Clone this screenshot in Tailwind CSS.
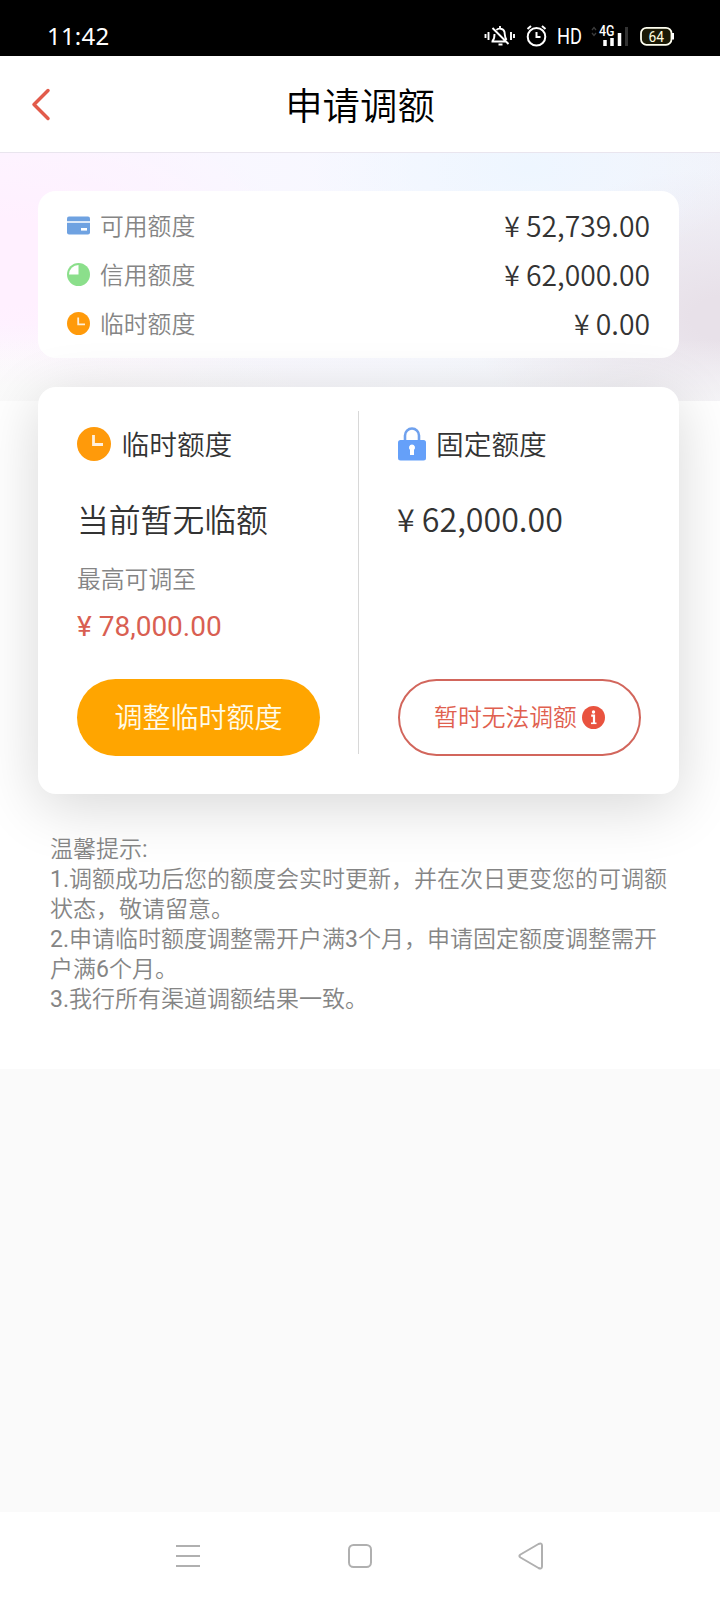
<!DOCTYPE html>
<html lang="zh-CN">
<head>
<meta charset="utf-8">
<title>申请调额</title>
<script src="https://cdn.jsdelivr.net/npm/@tailwindcss/browser@4"></script>
</head>
<body class="w-[720px] h-[1600px] overflow-hidden flex flex-col bg-[#fafafa] font-['Noto_Sans_CJK_SC',sans-serif] font-[350] text-[#333]">

<!-- Status bar -->
<div class="h-14 shrink-0 bg-black text-white flex items-center justify-between pl-[47px] pr-[46px] pt-4">
  <span class="font-['Noto_Sans','Noto_Sans_CJK_SC',sans-serif] font-normal text-2xl leading-none tracking-[0.2px] pb-px">11:42</span>
  <svg class="block" width="190" height="24" viewBox="0 0 190 24" fill="none" stroke="#fff" stroke-width="2">
    <path d="M1.500 10v4M4.500 8v8M27 8v8M30 10v4" stroke-width="1.900"/>
    <path d="M7.500 17.500h15M8.500 17c2-2 2-4 2-7M12.500 6c1.500-2 7-2 8 2 .5 3 0 5 2 8M8.500 4l16 16M16 2v3" stroke-width="1.900"/>
    <path d="M14.500 20.500h4" stroke-width="2"/>
    <circle cx="52.500" cy="12.800" r="8.800"/>
    <path d="M52.500 8v5h4" /><path d="M43.500 5l3.500-3M61.500 5l-3.500-3"/>
    <text x="73" y="20" fill="#fff" stroke="none" font-family="Roboto" font-size="22" font-weight="400" textLength="25" lengthAdjust="spacingAndGlyphs">HD</text>
    <path d="M108 6l2-2.500 2 2.500M108 9l2 2.500 2-2.500" stroke="#3c3c3c" stroke-width="1.300"/>
    <text x="115" y="12" fill="#fff" stroke="none" font-family="Roboto" font-size="14" font-weight="500" textLength="15.500" lengthAdjust="spacingAndGlyphs">4G</text>
    <path d="M121 16v6M128 14v8M135.500 9v13" stroke-width="3.500"/>
    <path d="M142.500 3v19" stroke="#333" stroke-width="3"/>
    <rect x="157" y="3.800" width="30.500" height="17" rx="5.500" fill="#1a1905" stroke="#fffff0" stroke-width="1.800"/>
    <path d="M189 9v6.500" stroke-width="2.300"/>
    <text x="164.500" y="17.500" fill="#fffee0" stroke="none" font-family="Roboto" font-size="15" font-weight="400" textLength="15.500" lengthAdjust="spacingAndGlyphs">64</text>
  </svg>
</div>

<!-- Title bar -->
<header class="h-[97px] shrink-0 bg-white border-b border-[#e9e5ee] grid grid-cols-[120px_1fr_120px] items-center">
  <svg class="ml-[29px]" width="22" height="34" viewBox="0 0 22 34" fill="none" stroke="#e25b4b" stroke-width="3.500" stroke-linecap="round" stroke-linejoin="round"><path d="M19 3.500L5 17.500l14 14"/></svg>
  <h1 class="text-center text-[37.400px] leading-[56px] text-black font-[350] pb-px">申请调额</h1>
</header>

<main class="h-[916px] shrink-0 px-[38px] pt-[38px] bg-white bg-no-repeat bg-[length:720px_248px] bg-[image:linear-gradient(to_bottom,transparent_75%,#fafafaa0_100%),radial-gradient(ellipse_330px_90px_at_0px_260px,#fbfbfb_25%,transparent_100%),radial-gradient(ellipse_300px_170px_at_0px_110px,#fff0ff_25%,transparent_100%),radial-gradient(ellipse_220px_100px_at_530px_15px,#eef6ff,transparent),radial-gradient(ellipse_260px_150px_at_730px_165px,#e8e1e9_15%,transparent_100%),linear-gradient(90deg,#fcf6ff,#f6f8ff_60%,#f2f3fa)]">
  <!-- Limit summary -->
  <section class="w-[641px] h-[167px] rounded-[18px] bg-white px-[29px] pt-[10px]">
    <div class="h-[49px] flex items-center">
      <svg width="23" height="23" viewBox="0 0 23 23"><rect y="2.500" width="23" height="18" rx="2" fill="#6fa2e1"/><path d="M0 8h23" stroke="#fff" stroke-width="1.500"/><rect x="14" y="14" width="6" height="2.600" fill="#fff"/></svg>
      <span class="ml-2.5 pb-px text-[23.800px] text-[#858585]">可用额度</span>
      <span class="ml-auto text-[28.300px]">¥ 52,739.00</span>
    </div>
    <div class="h-[49px] flex items-center">
      <svg width="23" height="23" viewBox="0 0 23 23"><circle cx="11.500" cy="11.500" r="11.500" fill="#8bdf8b"/><path d="M11.500 2v9.500H2a9.500 9.500 0 0 1 9.500-9.500Z" fill="#fff"/></svg>
      <span class="ml-2.5 pb-px text-[23.800px] text-[#858585]">信用额度</span>
      <span class="ml-auto text-[28.300px]">¥ 62,000.00</span>
    </div>
    <div class="h-[49px] flex items-center">
      <svg width="23" height="23" viewBox="0 0 23 23"><circle cx="11.500" cy="11.500" r="11.500" fill="#ff9a0a"/><path d="M11.200 5.500v6.800h6.800" stroke="#ffefd8" stroke-width="1.800" fill="none"/></svg>
      <span class="ml-2.5 pb-px text-[23.800px] text-[#858585]">临时额度</span>
      <span class="ml-auto text-[28.300px]">¥ 0.00</span>
    </div>
  </section>

  <!-- Adjustable limits -->
  <section class="mt-[29px] w-[641px] h-[407px] rounded-[18px] bg-white shadow-[0_12px_60px_rgba(0,0,0,0.16)] flex pt-[24px]">
    <div class="w-[321px] h-[343px] border-r border-[#d8d8d8] pl-[39px]">
      <div class="h-[66px] flex items-center">
        <svg width="34" height="34" viewBox="0 0 34 34"><circle cx="17" cy="17" r="17" fill="#ff9a0a"/><path d="M16.500 8v9.500H26" stroke="#fff0dc" stroke-width="2.800" fill="none"/></svg>
        <span class="ml-[10.500px] text-[27.700px]">临时额度</span>
      </div>
      <div class="mt-[17px] text-[31.800px] leading-[48px]">当前暂无临额</div>
      <div class="mt-[18px] text-[23.800px] leading-9 text-[#858585]">最高可调至</div>
      <div class="mt-[13px] text-[28px] leading-9 font-['Roboto',sans-serif] font-normal text-[#d95f52]">¥ 78,000.00</div>
      <button class="mt-[34px] pb-1 w-[243px] h-[77px] rounded-full bg-[#ffa500] text-[#fffbe8] text-[28px] flex items-center justify-center">调整临时额度</button>
    </div>
    <div class="pl-[39px]">
      <div class="h-[66px] flex items-center">
        <svg width="28" height="34" viewBox="0 0 28 34"><path d="M7 14V8.500a7 7 0 0 1 14 0V14" fill="none" stroke="#6fa1ee" stroke-width="2.600"/><rect y="13" width="28" height="20.500" rx="2.500" fill="#65a0f9"/><path d="M14 17.500a3.100 3.100 0 0 1 2 5.400v5h-4v-5a3.100 3.100 0 0 1 2-5.400Z" fill="#fff"/></svg>
        <span class="ml-[10px] text-[27.700px]">固定额度</span>
      </div>
      <div class="mt-[17px] text-[32.200px] leading-[48px] -ml-px">¥ 62,000.00</div>
      <button class="mt-[137px] w-[243px] h-[77px] rounded-full border-2 border-[#d2665c] text-[#e0604f] text-[23.800px] flex items-center justify-center">
        <span class="pb-[3px]">暂时无法调额</span>
        <svg class="ml-[5px] mb-px" width="23" height="23" viewBox="0 0 23 23"><circle cx="11.500" cy="11.500" r="11.500" fill="#e9533f"/><circle cx="11.500" cy="6" r="1.700" fill="#fff"/><path d="M9.200 9.700h2.800V17" stroke="#fff" stroke-width="2.200" fill="none"/><path d="M9 17.300h5.500" stroke="#fff" stroke-width="1.600"/></svg>
      </button>
    </div>
  </section>

  <!-- Notes -->
  <section class="mt-[41px] pl-3 text-[23px] leading-[30px] text-[#858585] font-['Roboto','Noto_Sans_CJK_SC',sans-serif] whitespace-nowrap">
    <p>温馨提示<span class="font-normal">:</span></p>
    <p><span class="font-normal">1.</span>调额成功后您的额度会实时更新，并在次日更变您的可调额<br>状态，敬请留意。</p>
    <p><span class="font-normal">2.</span>申请临时额度调整需开户满<span class="font-normal">3</span>个月，申请固定额度调整需开<br>户满<span class="font-normal">6</span>个月。</p>
    <p><span class="font-normal">3.</span>我行所有渠道调额结果一致。</p>
  </section>
</main>

<!-- System navigation -->
<nav class="mt-auto h-[88px] shrink-0 bg-white grid grid-cols-3 items-center px-[92px]">
  <svg class="ml-[84px]" width="24" height="28" viewBox="0 0 24 28" stroke="#b0b0b0" stroke-width="2"><path d="M0 4h24M0 14h24M0 24h24"/></svg>
  <svg class="mx-auto" width="24" height="28" viewBox="0 0 24 28" fill="none" stroke="#b0b0b0" stroke-width="2"><rect x="1" y="3" width="22" height="22" rx="4.500"/></svg>
  <svg class="ml-auto mr-[84px]" width="26" height="28" viewBox="0 0 26 28" fill="none" stroke="#b0b0b0" stroke-width="2" stroke-linejoin="round"><path d="M2.500 12.500L20.500 2c2-1 3.500-.5 3.500 1.500v21c0 2-1.500 2.500-3.500 1.500L2.500 15.500c-1.500-1-1.500-2 0-3Z"/></svg>
</nav>
</body>
</html>
